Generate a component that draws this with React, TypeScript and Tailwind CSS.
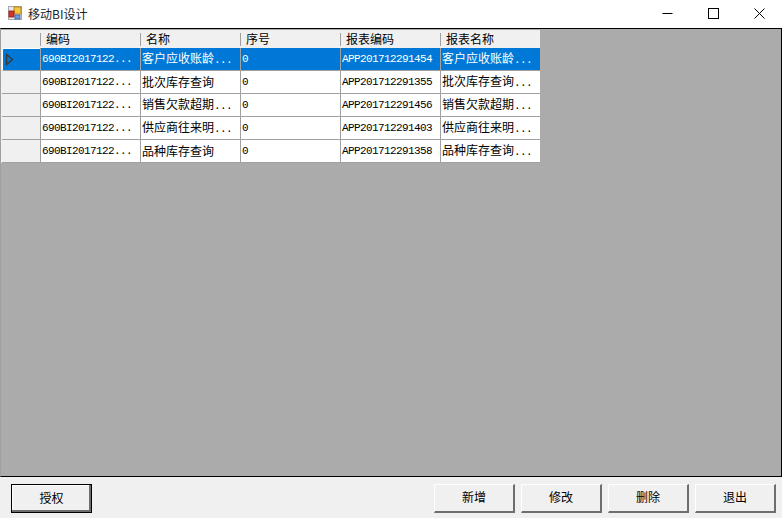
const COLUMNS = ["编码", "名称", "序号", "报表编码", "报表名称"];

const ROWS = [
  ["690BI2017122...", "客户应收账龄...", "0", "APP201712291454", "客户应收账龄..."],
  ["690BI2017122...", "批次库存查询", "0", "APP201712291355", "批次库存查询..."],
  ["690BI2017122...", "销售欠款超期...", "0", "APP201712291456", "销售欠款超期..."],
  ["690BI2017122...", "供应商往来明...", "0", "APP201712291403", "供应商往来明..."],
  ["690BI2017122...", "品种库存查询", "0", "APP201712291358", "品种库存查询..."],
];

const MONO_CELLS = [0, 2, 3];

function AppIcon() {
  return (
    <svg width="14" height="14" viewBox="0 0 14 14" className="shrink-0">
      <rect x="0.5" y="0.5" width="13" height="13" fill="#e8e8e8" stroke="#a8a8a8" />
      <rect x="6" y="1" width="7" height="7" fill="#f5c542" stroke="#a87a10" strokeWidth="0.8" />
      <rect x="1" y="5" width="5" height="6" fill="#d8342c" stroke="#8a1c18" strokeWidth="0.8" />
      <rect x="7" y="9" width="5" height="4" fill="#6c9be0" stroke="#3b62a8" strokeWidth="0.8" />
    </svg>
  );
}

function WinButton({ label, primary }: { label: string; primary?: boolean }) {
  return (
    <button
      className={`h-[29px] w-[81px] bg-[#f0f0f0] pb-[2px] text-[12px] text-black ${
        primary
          ? "border border-black shadow-[inset_-2px_-2px_0_#6e6e6e,inset_1px_1px_0_#fff]"
          : "border-t border-l border-t-white border-l-white border-r-2 border-b-2 border-r-[#6e6e6e] border-b-[#6e6e6e]"
      }`}
    >
      {label}
    </button>
  );
}

// the grid draws a trailing ellipsis in half-width cells
function CellText({ text }: { text: string }) {
  if (!text.endsWith("...")) return <span>{text}</span>;
  return (
    <span>
      {text.slice(0, -3)}
      <span className="font-['Liberation_Mono',monospace] text-[11px] tracking-[-0.6px]">...</span>
    </span>
  );
}

export default function App() {
  return (
    <div className="flex h-[518px] w-[782px] flex-col overflow-hidden bg-[#f0f0f0] font-['Noto_Sans_CJK_SC',sans-serif] text-[12px] text-black">
      {/* title bar */}
      <div className="flex h-[28px] shrink-0 items-start bg-white pl-[8px]">
        <div className="mt-[6px]">
          <AppIcon />
        </div>
        <span className="ml-[6px] mt-[5px] text-[12px] leading-[18px] text-[#222]">移动BI设计</span>
        <div className="ml-auto flex items-start pt-[8px]">
          <div className="flex w-[46px] justify-center">
            <svg width="11" height="11" viewBox="0 0 11 11">
              <path d="M0.5 5.5H10.5" stroke="#000" fill="none" />
            </svg>
          </div>
          <div className="flex w-[46px] justify-center">
            <svg width="11" height="11" viewBox="0 0 11 11">
              <rect x="0.5" y="0.5" width="10" height="10" stroke="#000" fill="none" />
            </svg>
          </div>
          <div className="flex w-[46px] justify-center">
            <svg width="11" height="11" viewBox="0 0 11 11">
              <path d="M0.5 0.5L10.5 10.5M10.5 0.5L0.5 10.5" stroke="#000" fill="none" />
            </svg>
          </div>
        </div>
      </div>

      {/* grid area */}
      <div className="min-h-0 flex-1 border border-black border-l-[#a0a0a0] bg-[#ababab] pt-px">
        <div className="w-[539px]">
          <div className="flex h-[18px] bg-[#f0f0f0]">
            <div className="w-[39px] shrink-0" />
            {COLUMNS.map((col) => (
              <div key={col} className="flex w-[100px] shrink-0 items-center">
                <span className="h-[13px] w-px bg-[#a0a0a0]" />
                <span className="pl-[5px] leading-none">{col}</span>
              </div>
            ))}
          </div>
          {ROWS.map((row, i) => {
            const selected = i === 0;
            return (
              <div key={row[3]} className="flex h-[23px]">
                <div className="flex w-[40px] shrink-0 border-r border-[#a0a0a0] bg-[#f0f0f0] pl-[1px]">
                  <div
                    className={`flex flex-1 items-center border-b pl-[2px] ${
                      selected ? "border-t border-l border-t-white border-l-white border-b-[#a0a0a0] bg-[#0078d7]" : "border-b-[#a0a0a0]"
                    }`}
                  >
                    {selected && (
                      <svg width="9" height="13" viewBox="0 0 9 13">
                        <path d="M1.5 1.5L7.5 6.5L1.5 11.5Z" fill="#0078d7" stroke="#3a3a3a" strokeWidth="1.5" />
                      </svg>
                    )}
                  </div>
                </div>
                {row.map((cell, c) => (
                  <div
                    key={c}
                    className={`flex shrink-0 items-center overflow-hidden whitespace-nowrap border-b border-[#a0a0a0] pl-[1px] ${
                      c === row.length - 1 ? "w-[99px]" : "w-[100px] border-r"
                    } ${selected ? "bg-[#0078d7] text-white" : "bg-white text-black"} ${
                      MONO_CELLS.includes(c) ? "font-['Liberation_Mono',monospace] text-[11px] tracking-[-0.6px]" : "text-[12px]"
                    }`}
                  >
                    <CellText text={cell} />
                  </div>
                ))}
              </div>
            );
          })}
        </div>
      </div>

      {/* bottom buttons */}
      <div className="flex h-[41px] shrink-0 items-start pl-[11px] pr-[6px] pt-[7px]">
        <WinButton label="授权" primary />
        <div className="ml-auto flex gap-[6px]">
          <WinButton label="新增" />
          <WinButton label="修改" />
          <WinButton label="删除" />
          <WinButton label="退出" />
        </div>
      </div>
    </div>
  );
}
